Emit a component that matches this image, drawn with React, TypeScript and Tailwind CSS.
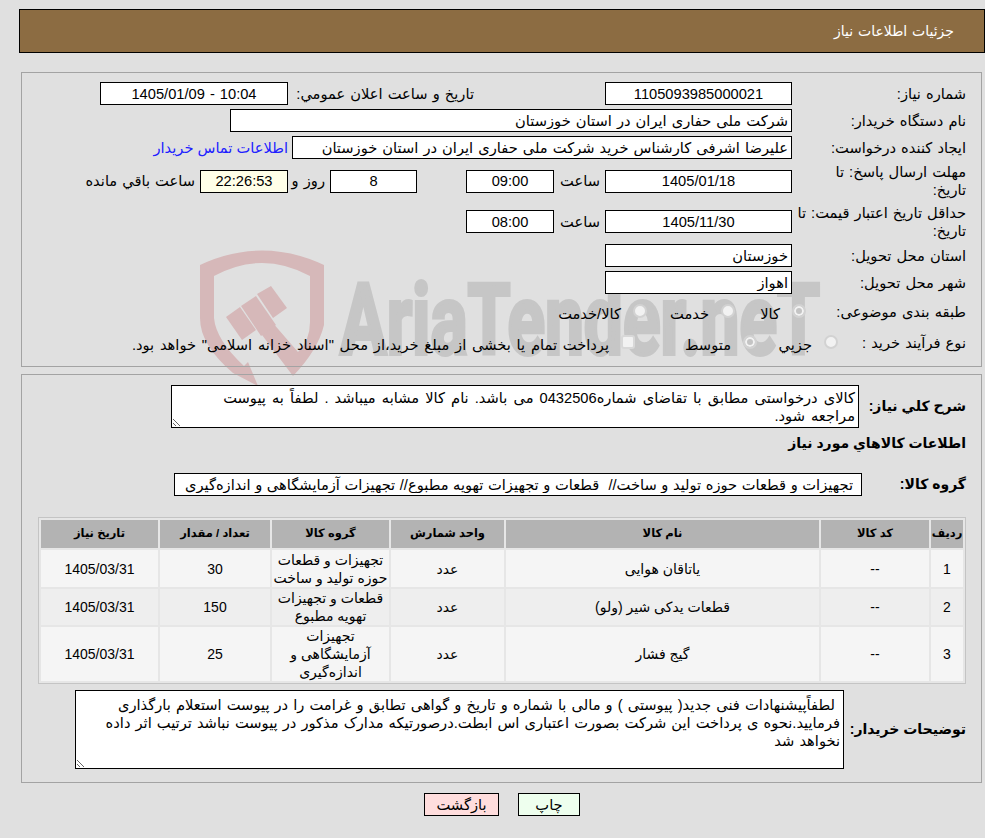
const fieldBase = 'h-[23px] border border-black bg-white px-[3px] text-black outline-none [word-spacing:1px]';

function Field({ value, width, center }: { value: string; width: string; center?: boolean }) {
  return <input readOnly dir="rtl" value={value} className={`${fieldBase} ${width} ${center ? 'text-center' : 'text-right'}`} />;
}

function Row({ label, height, labelWidth = 'w-[174px]', children }: { label: React.ReactNode; height: string; labelWidth?: string; children?: React.ReactNode }) {
  return (
    <div className={`flex items-center ${height}`}>
      <div className={`${labelWidth} shrink-0 leading-[18px]`}>{label}</div>
      {children}
    </div>
  );
}

function Radio({ checked }: { checked?: boolean }) {
  return (
    <input
      type="radio"
      disabled
      checked={!!checked}
      readOnly
      className="m-0 mb-[2px] size-[14px] shrink-0 appearance-none rounded-full border-2 border-[#d2d2d2] bg-[#f2f2f2] checked:bg-[#c4c4c4] checked:shadow-[inset_0_0_0_2px_#f2f2f2]"
    />
  );
}

function Watermark() {
  return (
    <svg dir="ltr" className="absolute left-0 top-0 -z-10" width="985" height="420" viewBox="0 0 985 420">
      <path fill="#d6b8b9" fillRule="evenodd" d="M200 265 Q262 236 324 265 L324 325 Q318 350 293 376 L259 331 L272 322 L298 352 Q310 340 310 322 L310 276 Q262 250 214 276 L214 318 Q216 340 244 366 L248 362 L258 386 L233 373 Q200 345 200 318 Z" />
      <polygon fill="#d6b8b9" points="226,317 240,307 256,330 242,340" />
      <polygon fill="#d6b8b9" points="241,306 256,296 276,325 261,336" />
      <polygon fill="#d6b8b9" points="257,294 271,286 287,308 273,318" />
      <text x="340" y="354" direction="ltr" textAnchor="start" fill="#c6c6c6" stroke="#c6c6c6" strokeWidth="4" fontFamily="Roboto, sans-serif" fontWeight="700" fontSize="98" textLength="480" lengthAdjust="spacingAndGlyphs">AriaTender.neT</text>
    </svg>
  );
}

const items = [
  { id: 1, name: 'یاتاقان هوایی', group: ['تجهیزات و قطعات', 'حوزه تولید و ساخت'], qty: '30', h: 'h-[37px]', bg: 'bg-[#f5f5f5]' },
  { id: 2, name: 'قطعات یدکی شیر (ولو)', group: ['قطعات و تجهیزات', 'تهویه مطبوع'], qty: '150', h: 'h-[36px]', bg: 'bg-[#eeeeee]' },
  { id: 3, name: 'گیج فشار', group: ['تجهیزات', 'آزمایشگاهی و', 'اندازه‌گیری'], qty: '25', h: 'h-[54px]', bg: 'bg-[#f5f5f5]' },
];

export default function App() {
  return (
    <div dir="rtl" className="relative z-0 min-h-[838px] bg-[#e0e0e0] font-['Liberation_Sans','DejaVu_Sans',sans-serif] text-[14.67px] text-black">
      <Watermark />
      <div className="pt-[9px]">
        <div className="mr-0 ml-[19px] flex h-[44px] items-center border border-black bg-[#8c6c42] pr-[30px] text-[14px] text-white [word-spacing:1px]">جزئیات اطلاعات نیاز</div>
      </div>

      <div className="mt-[19px] mr-[3px] ml-[21px] h-[295px] border border-[#a3a3a3] pt-[7px] pr-[15px] [word-spacing:1px]">
        <Row label="شماره نیاز:" height="h-[27px]">
          <Field value="1105093985000021" width="w-[187px]" center />
          <div className="mr-[131px] w-[186px] whitespace-nowrap">تاریخ و ساعت اعلان عمومي:</div>
          <Field value="10:04 - 1405/01/09" width="w-[188px]" center />
        </Row>
        <Row label="نام دستگاه خریدار:" height="h-[27px]">
          <Field value="شرکت ملی حفاری ایران در استان خوزستان" width="w-[562px]" />
        </Row>
        <Row label="ایجاد کننده درخواست:" height="h-[27px]">
          <Field value="علیرضا اشرفی کارشناس خرید شرکت ملی حفاری ایران در استان خوزستان" width="w-[500px]" />
          <a className="mr-[4px] text-[#2020ff] [word-spacing:0px]">اطلاعات تماس خریدار</a>
        </Row>
        <Row label={<>مهلت ارسال پاسخ: تا<br />تاریخ:</>} height="h-[40px]">
          <Field value="1405/01/18" width="w-[187px]" center />
          <div className="w-[51px] pr-[5px]">ساعت</div>
          <Field value="09:00" width="w-[88px]" center />
          <div className="w-[49px]" />
          <Field value="8" width="w-[87px]" center />
          <div className="w-[42px] pr-[5px] whitespace-nowrap">روز و</div>
          <input readOnly value="22:26:53" className="h-[23px] w-[88px] border border-black bg-[#ffffe8] px-[3px] text-center text-black outline-none" />
          <div className="mr-[5px] whitespace-nowrap">ساعت باقي مانده</div>
        </Row>
        <Row label={<>حداقل تاریخ اعتبار قیمت: تا<br />تاریخ:</>} height="h-[41px]">
          <Field value="1405/11/30" width="w-[187px]" center />
          <div className="w-[51px] pr-[5px]">ساعت</div>
          <Field value="08:00" width="w-[88px]" center />
        </Row>
        <Row label="استان محل تحویل:" height="h-[27px]">
          <Field value="خوزستان" width="w-[187px]" />
        </Row>
        <Row label="شهر محل تحویل:" height="h-[27px]">
          <Field value="اهواز" width="w-[187px]" />
        </Row>
        <Row label="طبقه بندی موضوعی:" height="h-[32px]" labelWidth="w-[160px]">
          <div className="flex w-[71px] items-center gap-3"><Radio checked /><span className="mt-[4px]">کالا</span></div>
          <div className="flex w-[88px] items-center gap-3"><Radio /><span className="mt-[4px]">خدمت</span></div>
          <div className="flex items-center gap-3"><Radio /><span className="mt-[4px]">کالا/خدمت</span></div>
        </Row>
        <Row label="نوع فرآیند خرید :" height="h-[30px]" labelWidth="w-[128px]">
          <div className="flex w-[81px] items-center gap-3"><Radio /><span className="mt-[4px]">جزیي</span></div>
          <div className="flex w-[122px] items-center gap-3"><Radio checked /><span className="mt-[4px]">متوسط</span></div>
          <div className="flex items-center gap-3">
            <input type="checkbox" disabled className="m-0 mb-[2px] size-[14px] shrink-0 appearance-none rounded-[3px] border-2 border-[#d8d8d8] bg-[#f2f2f2]" />
            <span className="mt-[4px] whitespace-nowrap [word-spacing:1.7px]">پرداخت تمام یا بخشی از مبلغ خرید،از محل "اسناد خزانه اسلامی" خواهد بود.</span>
          </div>
        </Row>
      </div>

      <div className="mt-[7px] mr-[3px] ml-[21px] h-[409px] border border-[#a3a3a3] pt-[10px] pr-[15px]">
        <div className="flex h-[43px] items-center">
          <div className="w-[107px] shrink-0 text-[14px] font-bold">شرح کلي نیاز:</div>
          <textarea readOnly dir="rtl" rows={2} className="h-[43px] w-[688px] border border-black bg-white px-[3px] py-[3px] leading-[18px] outline-none [word-spacing:2px]" value={'کالای درخواستی مطابق با تقاضای شماره0432506 می باشد. نام کالا مشابه میباشد . لطفاً به پیوست\nمراجعه شود.'} />
        </div>
        <div className="flex h-[30px] items-center text-[14px] font-bold">اطلاعات کالاهاي مورد نیاز</div>
        <div className="mt-[15px] flex h-[23px] items-center">
          <div className="w-[104px] shrink-0 text-[14px] font-bold">گروه کالا:</div>
          <input readOnly dir="rtl" value="تجهیزات و قطعات حوزه تولید و ساخت//  قطعات و تجهیزات تهویه مطبوع// تجهیزات آزمایشگاهی و اندازه‌گیری" className="h-[23px] w-[688px] border border-black bg-white pr-[8px] pl-[3px] text-right text-black outline-none [word-spacing:0.5px]" />
        </div>

        <table className="mt-[21px] w-[928px] table-fixed border-separate border-spacing-[2px] border border-[#c4c4c4] bg-[#e6e6e6] text-center text-[14px]">
          <colgroup>
            <col className="w-[32px]" />
            <col className="w-[108px]" />
            <col className="w-[313px]" />
            <col className="w-[113px]" />
            <col className="w-[117px]" />
            <col className="w-[110px]" />
            <col className="w-[117px]" />
          </colgroup>
          <thead>
            <tr className="h-[28px] bg-[#b3b3b3] text-[11.5px]">
              <th className="p-0">ردیف</th>
              <th className="p-0">کد کالا</th>
              <th className="p-0">نام کالا</th>
              <th className="p-0">واحد شمارش</th>
              <th className="p-0">گروه کالا</th>
              <th className="p-0">تعداد / مقدار</th>
              <th className="p-0">تاریخ نیاز</th>
            </tr>
          </thead>
          <tbody>
            {items.map(item => (
              <tr key={item.id} className={`${item.h} ${item.bg} leading-[18px]`}>
                <td className="p-0">{item.id}</td>
                <td className="p-0">--</td>
                <td className="p-0">{item.name}</td>
                <td className="p-0">عدد</td>
                <td className="p-0">{item.group.map(line => <div key={line}>{line}</div>)}</td>
                <td className="p-0">{item.qty}</td>
                <td className="p-0">1405/03/31</td>
              </tr>
            ))}
          </tbody>
        </table>

        <div className="mt-[6px] flex h-[79px] items-center">
          <div className="w-[122px] shrink-0 text-[14px] font-bold">توضیحات خریدار:</div>
          <textarea readOnly dir="rtl" className="h-[79px] w-[769px] border border-black bg-white px-[3px] py-[5px] leading-[18px] outline-none [word-spacing:1px]" value={' لطفاًپیشنهادات فنی جدید( پیوستی ) و مالی با شماره و تاریخ و گواهی تطابق و غرامت را در پیوست استعلام بارگذاری\nفرمایید.نحوه ی پرداخت این شرکت بصورت اعتباری اس ابطت.درصورتیکه مدارک مذکور در پیوست نباشد ترتیب اثر داده\nنخواهد شد'} />
        </div>
      </div>

      <div className="mt-[10px] flex justify-center gap-[19px] pl-[19px]">
        <button className="h-[23px] w-[62px] border border-black bg-[#eeffee]">چاپ</button>
        <button className="h-[23px] w-[75px] border border-black bg-[#ffdddd]">بازگشت</button>
      </div>
    </div>
  );
}
